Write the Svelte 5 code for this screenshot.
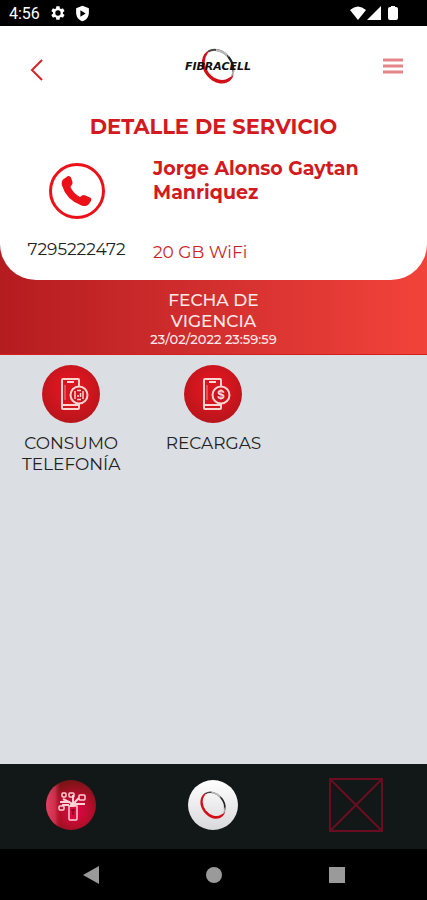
<script>
  let service = {
    name: "Jorge Alonso Gaytan Manriquez",
    phone: "7295222472",
    plan: "20 GB WiFi",
    expires: "23/02/2022 23:59:59",
  };
</script>

{#snippet ring()}
  <path d="M1-19A15 19 0 0 1 15-1" fill="none" stroke="#444" stroke-width="2" />
  <path d="M9-15A15 19 0 0 1 15-3" fill="none" stroke="#bbb" stroke-width="2.4" />
  <path d="M15-1A15 19 0 0 1 9 15" fill="none" stroke="#222" stroke-width="2.4" />
  <path d="M11 13A15 19 0 0 1 5 18" fill="none" stroke="#aaa" stroke-width="2" />
  <path d="M3-19.5A16 20 0 0 0-16 0A16 20 0 0 0 4 20L8 17.5Q5 18.5 1 17.5A14 18 0 0 1-12.5 0A14 18 0 0 1-1-17.5Z" fill="#d31018" />
{/snippet}

{#snippet phoneBase()}
  <path d="M37 21V15Q37 14 36 14H21Q20 14 20 15V43Q20 44 21 44H36Q37 44 37 43V38" />
  <path d="M25 17H32" />
  <path d="M20 40H37" />
  <path d="M23 20V35" stroke-width="1" opacity=".6" />
{/snippet}

<div class="screen">
  <div class="status">
    <span class="clock">4:56</span>
    <svg width="16" height="16" viewBox="0 0 24 24" fill="#fff">
      <path fill-rule="evenodd" d="M19.4 13a7.6 7.6 0 0 0 0-2l2.1-1.6a.5.5 0 0 0 .1-.6l-2-3.5a.5.5 0 0 0-.6-.2l-2.5 1a7.3 7.3 0 0 0-1.7-1L14.4 2.4a.5.5 0 0 0-.5-.4h-4a.5.5 0 0 0-.5.4L9 5.1a7.6 7.6 0 0 0-1.7 1l-2.5-1a.5.5 0 0 0-.6.2l-2 3.5a.5.5 0 0 0 .1.6L4.5 11a7.6 7.6 0 0 0 0 2l-2.2 1.6a.5.5 0 0 0-.1.6l2 3.5c.1.2.4.3.6.2l2.5-1a7.3 7.3 0 0 0 1.7 1l.4 2.7c0 .2.2.4.5.4h4c.3 0 .5-.2.5-.4l.4-2.7a7.6 7.6 0 0 0 1.7-1l2.5 1c.2.1.5 0 .6-.2l2-3.5a.5.5 0 0 0-.1-.6zM12 16a4 4 0 1 1 0-8 4 4 0 0 1 0 8z" />
    </svg>
    <svg class="shield" width="17" height="17" viewBox="0 0 24 24" fill="#fff">
      <path fill-rule="evenodd" d="M12 1 3 4.5V11c0 5.6 3.8 10.7 9 12 5.2-1.3 9-6.4 9-12V4.5zM9 7.5 16.5 12 9 16.5z" />
    </svg>
    <div class="signal">
      <svg width="18" height="16" viewBox="0 0 18 16" fill="#fff"><path d="M1 5Q9-2 17 5L9 15Z" /></svg>
      <svg width="15" height="16" viewBox="0 0 15 16" fill="#fff"><path d="M0 15 14 1V15Z" /></svg>
      <svg class="battery" width="10" height="16" viewBox="0 0 10 16" fill="#fff"><path d="M3 1H7V2H8Q10 2 10 4V13Q10 15 8 15H2Q0 15 0 13V4Q0 2 2 2H3Z" /></svg>
    </div>
  </div>

  <main>
    <div class="hero">
      <div class="card">
        <header>
          <button class="back" aria-label="Regresar">
            <svg width="14" height="22" viewBox="0 0 14 22" fill="none" stroke="#d8232a" stroke-width="2"><path d="M12 1 2 11 12 21" /></svg>
          </button>
          <svg class="logo" width="72" height="40" viewBox="-36 -20 72 40">
            <g transform="rotate(-38) scale(.92)">{@render ring()}</g>
            <text x="0" y="4" text-anchor="middle">FIBRACELL</text>
          </svg>
          <button class="menu" aria-label="Menú">
            <svg width="20" height="16" viewBox="0 0 20 16" stroke="#e58489" stroke-width="3"><path d="M0 2H20M0 8H20M0 14H20" /></svg>
          </button>
        </header>
        <h1>DETALLE DE SERVICIO</h1>
        <div class="detail">
          <div class="line">
            <svg width="58" height="58" viewBox="0 0 58 58">
              <circle cx="29" cy="29" r="26.5" fill="none" stroke="#ec1119" stroke-width="3" />
              <path fill="#ec1119" d="M15 17.500 20 14Q22 13.500 23 15.500L24.500 20Q25 22 23 24L22.500 25Q25 31 32 35L34 33.500Q35.500 32.500 37.500 33.500L42 35.500Q44 36.500 43 39L40.500 42.500Q38 45 33.500 43.500Q18 37.500 14 23.500Q13 19.500 15 17.500Z" />
            </svg>
            <p>{service.phone}</p>
          </div>
          <div class="owner">
            <h2>{service.name}</h2>
            <p>{service.plan}</p>
          </div>
        </div>
      </div>
      <div class="validity">
        <h3>FECHA DE VIGENCIA</h3>
        <p>{service.expires}</p>
      </div>
    </div>

    <div class="options">
      <a href="#consumo">
        <span class="disc">
          <svg width="58" height="58" viewBox="0 0 58 58" fill="none" stroke="#ffd5d2" stroke-width="2">
            {@render phoneBase()}
            <circle cx="37" cy="30" r="8.5" fill="#c9151d" />
            <path d="M33 26V34M41 26V34M35 25.5H39M35 34.5H39" stroke-width="1.5" />
            <path d="M36 32V30M38.500 32V28" stroke-width="1.5" />
          </svg>
        </span>
        CONSUMO TELEFONÍA
      </a>
      <a href="#recargas">
        <span class="disc">
          <svg width="58" height="58" viewBox="0 0 58 58" fill="none" stroke="#ffd5d2" stroke-width="2">
            {@render phoneBase()}
            <circle cx="37" cy="30" r="8.5" fill="#c9151d" />
            <text x="37" y="34" text-anchor="middle">$</text>
          </svg>
        </span>
        RECARGAS
      </a>
    </div>
  </main>

  <nav class="tabs">
    <button aria-label="Servicios">
      <svg width="52" height="52" viewBox="0 0 52 52">
        <defs>
          <radialGradient id="glow" cx=".58" cy=".62" r=".6">
            <stop offset="0" stop-color="#e5054c" />
            <stop offset=".5" stop-color="#b80d2c" />
            <stop offset="1" stop-color="#7b1416" />
          </radialGradient>
          <linearGradient id="shine">
            <stop offset="0" stop-color="#ff4d79" stop-opacity=".8" />
            <stop offset=".18" stop-color="#f04468" stop-opacity=".6" />
            <stop offset=".3" stop-color="#c01030" stop-opacity="0" />
          </linearGradient>
        </defs>
        <circle cx="26" cy="26" r="25" fill="url(#glow)" />
        <circle cx="26" cy="26" r="25" fill="url(#shine)" />
        <g fill="none" stroke="#ffd0d4" stroke-width="1.5">
          <path d="M24 27H32V40Q32 41 31 41H25Q24 41 24 40Z" fill="#d80b3c" />
          <path d="M26 28V24L18 20M28 28V16M30 27V23L34 19M24 26H17M31 25H40M25 23H15" stroke-width="2" />
          <rect x="17" y="14" width="4" height="4" rx="1" />
          <rect x="24" y="14" width="5" height="4" rx="1" />
          <rect x="34" y="16" width="6" height="5" rx="1" />
          <rect x="14" y="27" width="5" height="4" rx="1" />
          <path d="M28 30V36M26 31H30" stroke="#8d0720" />
        </g>
      </svg>
    </button>
    <button aria-label="Inicio">
      <svg width="52" height="52" viewBox="0 0 52 52">
        <defs>
          <linearGradient id="pearl" x1="0" y1="0" x2="0" y2="1">
            <stop offset="0" stop-color="#fff" />
            <stop offset="1" stop-color="#d9d9dc" />
          </linearGradient>
        </defs>
        <circle cx="26" cy="26" r="25" fill="url(#pearl)" />
        <g transform="translate(26 26) rotate(-38) scale(.72)">{@render ring()}</g>
      </svg>
    </button>
    <button aria-label="Imagen">
      <svg width="54" height="54" viewBox="0 0 54 54" fill="none" stroke="#6b0d20" stroke-width="2">
        <path d="M1 1H53V53H1ZM1 1 53 53M53 1 1 53" />
      </svg>
    </button>
  </nav>

  <nav class="system">
    <button aria-label="Atrás"><svg width="18" height="20" viewBox="0 0 18 20"><path d="M1 10 17 1V19Z" /></svg></button>
    <button aria-label="Pantalla de inicio"><svg width="18" height="18" viewBox="0 0 18 18"><circle cx="9" cy="9" r="8" /></svg></button>
    <button aria-label="Recientes"><svg width="18" height="18" viewBox="0 0 18 18"><rect x="1" y="1" width="16" height="16" /></svg></button>
  </nav>
</div>

<style>
  :global(body) {
    margin: 0;
    background: #000;
  }
  .screen {
    display: flex;
    flex-direction: column;
    min-height: 100vh;
    font-family: Montserrat, Inter, sans-serif;
  }
  h1, h2, h3, p {
    margin: 0;
  }
  svg {
    display: block;
  }
  button {
    padding: 0;
    border: none;
    background: none;
    cursor: pointer;
  }
  .status {
    display: flex;
    align-items: center;
    height: 26px;
    padding: 0 29px 0 9px;
    background: #000;
    color: #fff;
  }
  .clock {
    font-family: Roboto, sans-serif;
    font-size: 16px;
    margin-right: 10px;
  }
  .shield {
    margin-left: 8px;
  }
  .signal {
    display: flex;
    margin-left: auto;
  }
  .battery {
    margin-left: 6px;
  }
  main {
    flex: 1;
    background: #dbdee3;
  }
  .hero {
    background: linear-gradient(90deg, #b51c1f, #d32f2f 50%, #f2433a);
    border-bottom: 1px solid #d3201f;
  }
  .card {
    padding-bottom: 18px;
    background: #fff;
    border-radius: 0 0 36px 36px;
  }
  header {
    display: flex;
    align-items: center;
    justify-content: space-between;
    height: 80px;
    padding: 0 24px 0 30px;
  }
  .back {
    padding-top: 8px;
  }
  .logo {
    margin-left: 8px;
  }
  .logo text {
    font: italic bold 11px "DejaVu Sans", sans-serif;
    fill: #111;
  }
  h1 {
    color: #d31a20;
    font-size: 21px;
    font-weight: 700;
    line-height: 42px;
    text-align: center;
  }
  .detail {
    display: grid;
    grid-template-columns: 153px 1fr;
  }
  .line {
    display: flex;
    flex-direction: column;
    align-items: center;
    gap: 16px;
    padding-top: 14px;
    color: #222;
    font-size: 17px;
    line-height: 26px;
  }
  .owner {
    display: flex;
    flex-direction: column;
    justify-content: space-between;
    padding: 9px 24px 0 0;
    color: #c9262c;
    font-size: 17px;
    line-height: 20px;
  }
  h2 {
    color: #d31a20;
    font-size: 19px;
    font-weight: 700;
    line-height: 24px;
    max-width: 240px;
  }
  .validity {
    padding: 10px 0 7px;
    color: #ffe9e7;
    text-align: center;
  }
  h3 {
    max-width: 120px;
    margin: 0 auto;
    font-size: 17px;
    font-weight: 500;
    line-height: 21px;
  }
  .validity p {
    font-size: 13px;
    font-weight: 500;
    line-height: 15px;
  }
  .options {
    display: grid;
    grid-template-columns: repeat(3, 1fr);
    padding-top: 10px;
  }
  .options a {
    display: flex;
    flex-direction: column;
    align-items: center;
    gap: 10px;
    padding: 0 16px;
    color: #222;
    font-size: 17px;
    line-height: 21px;
    text-align: center;
    text-decoration: none;
  }
  .disc {
    border-radius: 50%;
    background: radial-gradient(circle at 50% 40%, #d9161f 30%, #a81419);
  }
  .disc text {
    font: bold 12px Inter, sans-serif;
    fill: #ffd5d2;
    stroke: none;
  }
  .tabs {
    display: grid;
    grid-template-columns: repeat(3, 1fr);
    place-items: center;
    height: 82px;
    padding-bottom: 3px;
    background: #121718;
  }
  .system {
    display: grid;
    grid-template-columns: repeat(3, 1fr);
    place-items: center;
    height: 51px;
    padding: 0 29px;
    background: #000;
  }
  .system svg {
    fill: #9a9a9a;
  }
</style>
